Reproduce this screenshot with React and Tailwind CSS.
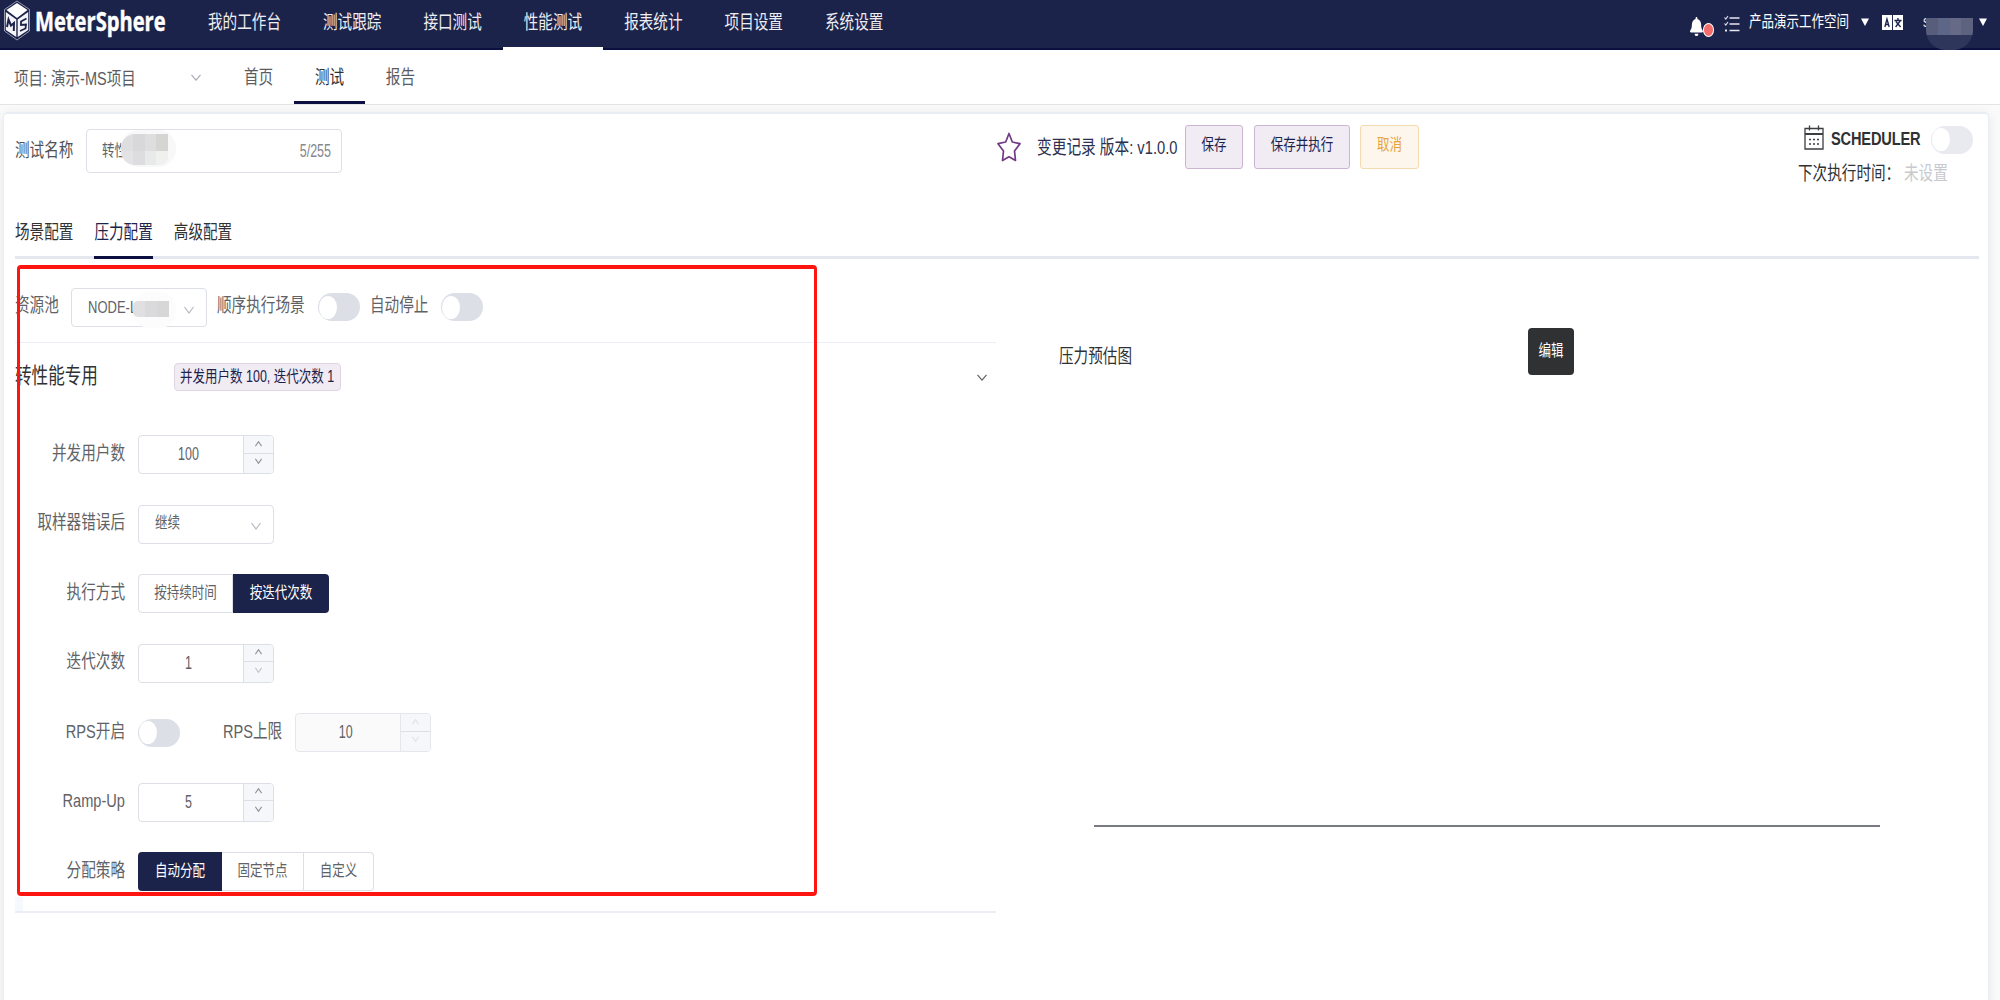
import React from "react";
import { FaBell } from "react-icons/fa";

const FONT = "font-['Liberation_Sans','Noto_Sans_CJK_SC',sans-serif]";

/* Tall, narrow lettering used by every label of the page. */
function T({ children, tall = false, className = "" }) {
  return (
    <span className={`inline-block shrink-0 origin-center whitespace-nowrap leading-none ${tall ? "scale-y-[1.48]" : "scale-y-[1.29]"} ${className}`}>
      {children}
    </span>
  );
}

function Chevron({ up = false, className = "" }) {
  return (
    <svg viewBox="0 0 10 8" preserveAspectRatio="none" className={className} fill="none" stroke="currentColor" strokeWidth="1.2">
      <path vectorEffect="non-scaling-stroke" d={up ? "M0.5 7 L5 1 L9.5 7" : "M0.5 1 L5 7 L9.5 1"} />
    </svg>
  );
}

function Switch({ tone = "bg-[#dcdfe6]" }) {
  return (
    <span className={`flex h-7 w-[42px] shrink-0 items-center rounded-[14px] px-px ${tone}`}>
      <span className="h-[23px] w-[18px] rounded-[50%] bg-white" />
    </span>
  );
}

function NumberBox({ value, disabled = false, dimDown = false }) {
  return (
    <div className={`flex h-[39px] w-[136px] shrink-0 overflow-hidden rounded-[4px] border ${disabled ? "border-[#e4e7ed] bg-[#fafafa]" : "border-[#dcdfe6] bg-white"}`}>
      <div className="flex flex-1 items-center justify-center pr-[5px] text-[12.5px] text-[#606266]">
        <T tall>{value}</T>
      </div>
      <div className={`flex w-[30px] flex-col border-l bg-[#f5f7fa] ${disabled ? "border-[#e4e7ed] text-[#dfe2e8]" : "border-[#dcdfe6] text-[#909399]"}`}>
        <div className="flex flex-1 items-center justify-center border-b border-[#dcdfe6] pb-px">
          <Chevron up className="h-[6px] w-[7px]" />
        </div>
        <div className={`flex flex-1 items-center justify-center pb-1 ${dimDown ? "text-[#c0c4cc]" : ""}`}>
          <Chevron className="h-[6px] w-[7px]" />
        </div>
      </div>
    </div>
  );
}

function Segments({ items }) {
  return (
    <div className="flex h-[39px] text-[12.5px] text-[#606266]">
      {items.map((it, i) => (
        <div
          key={it.label}
          className={`flex items-center justify-center first:rounded-l-[4px] last:rounded-r-[4px] ${it.width} ${
            it.active ? "bg-[#1c234b] text-white" : "border-y border-r border-[#dcdfe6] bg-white"
          } ${i === 0 && !it.active ? "border-l" : ""}`}
        >
          <T>{it.label}</T>
        </div>
      ))}
    </div>
  );
}

function FormRow({ label, children }) {
  return (
    <div className="flex h-[69.5px] items-start">
      <div className="flex h-[38px] w-[110px] shrink-0 items-center justify-end text-[14.6px] text-[#606266]">
        <T>{label}</T>
      </div>
      <div className="ml-[13px] flex items-center">{children}</div>
    </div>
  );
}

function Logo() {
  return (
    <div className="flex items-center">
      <svg viewBox="0 0 28 42" className="ml-[3px] h-[42px] w-7">
        <path d="M14 1 L26.5 9.5 V31 L14 40 L1.5 31 V9.5 Z" fill="none" stroke="#c9cbd8" strokeWidth="0.7" />
        <path d="M14 3 L24.5 10 L14 18 L3.5 10 Z" fill="#fff" />
        <path d="M2.8 12 L13.3 19.5 V37 L2.8 30 Z M25.2 12 L14.7 19.5 V37 L25.2 30 Z" fill="#f4f4f8" />
        <path d="M4 27 L5.5 19.5 L8 25.5 L11 23 L10.8 31" fill="none" stroke="#1c234b" strokeWidth="2" />
        <path d="M23.5 18.5 L18 21.5 L18 25 L23 24.5 L22.5 28.5 L17 31" fill="none" stroke="#1c234b" strokeWidth="1.8" />
      </svg>
      <span className="ml-[4px] mt-[-1px] inline-block w-[131px] origin-left scale-x-[0.875] scale-y-[1.2] whitespace-nowrap font-['Open_Sans',sans-serif] text-[23px] font-bold leading-none text-white [-webkit-text-stroke:0.4px_white]">
        MeterSphere
      </span>
    </div>
  );
}

function TopBar() {
  const items = ["我的工作台", "测试跟踪", "接口测试", "性能测试", "报表统计", "项目设置", "系统设置"];
  return (
    <header className="flex h-[50px] justify-between border-b-2 border-[#0b1040] bg-[#1c234b] text-white">
      <div className="flex">
        <div className="flex w-[187px] items-start">
          <Logo />
        </div>
        <nav className="flex text-[14.6px] text-[#eeeef2]">
          {items.map((t) => (
            <div key={t} className={`flex h-[50px] items-center px-[21px] pb-[4px] ${t === "性能测试" ? "shadow-[inset_0_-3px_0_#fff]" : ""}`}>
              <T>{t}</T>
            </div>
          ))}
        </nav>
      </div>
      <div className="flex h-[44px] items-center">
        <span className="relative mt-2 flex w-[34px]">
          <FaBell className="h-[19px] w-[13px]" preserveAspectRatio="none" />
          <span className="absolute left-[13px] top-[6px] h-[14px] w-[11.5px] rounded-[50%] border border-white bg-[#f56c6c]" />
        </span>
        <svg viewBox="0 0 16 18" className="mt-[3px] h-[18px] w-4" fill="none" stroke="#e6e7ee" strokeWidth="1.5">
          <path d="M5.5 3 H15.5 M5.5 9 H15.5 M5.5 15.5 H15.5" />
          <path d="M0.5 2.5 L1.8 4 L4 1 M0.5 8.5 L1.8 10 L4 7" strokeWidth="1.1" />
          <path d="M1 15.5 H3" strokeWidth="2" />
        </svg>
        <T className="ml-[9px] text-[12.5px]">产品演示工作空间</T>
        <svg viewBox="0 0 8 8" className="ml-[12px] h-2 w-2"><path d="M0 0.5 H8 L4 8 Z" fill="#fff" /></svg>
        <svg viewBox="0 0 22 15" preserveAspectRatio="none" className="ml-[13px] h-[15px] w-[21px]">
          <path d="M0 0 H10.5 V15 H0 Z M11.5 0 H22 V15 H11.5 Z" fill="#fff" />
          <path d="M3 12 L5.2 4 L7.5 12 M3.6 9.5 H7" fill="none" stroke="#1c234b" strokeWidth="1.4" />
          <path d="M13 5.5 H20.5 M16.7 3 V5.5 M14.3 12 L19 6 M14.5 6.5 L19.5 12" fill="none" stroke="#1c234b" strokeWidth="1.4" />
        </svg>
        <span className="relative ml-[20px] flex w-[49px] justify-between text-[12.5px] text-[#e6e7ee]">
          <T>s</T>
          <T>g</T>
          <span className="absolute left-[3px] top-[2px] h-[32px] w-[47px] overflow-hidden rounded-b-[20px] bg-[#2f365b]">
            <span className="flex h-[17px]">
              <span className="w-3 bg-[#585d7c]" />
              <span className="w-3 bg-[#5e6688]" />
              <span className="w-3 bg-[#666a87]" />
              <span className="w-3 bg-[#5d627f]" />
            </span>
          </span>
        </span>
        <svg viewBox="0 0 8 8" className="ml-[7px] mr-[13px] h-2 w-2"><path d="M0 0.5 H8 L4 8 Z" fill="#fff" /></svg>
      </div>
    </header>
  );
}

function SubBar() {
  return (
    <div className="flex h-[55px] border-b border-[#e4e4e6] bg-white text-[14.6px] text-[#5a5c60]">
      <div className="flex w-[223px] items-center pl-[14px]">
        <T className="mt-[4px] w-[177px] text-[14.5px]">项目: 演示-MS项目</T>
        <Chevron className="h-[7px] w-[10px] text-[#a8abb2]" />
      </div>
      {["首页", "测试", "报告"].map((t) => (
        <div key={t} className={`flex h-[54px] items-center px-[20.9px] pt-[2px] ${t === "测试" ? "text-[#303133] shadow-[inset_0_-3px_0_#0b1040]" : ""}`}>
          <T>{t}</T>
        </div>
      ))}
    </div>
  );
}

function Toolbar() {
  const btn = "flex h-11 items-center justify-center rounded-[3px] border pb-[3px] text-[12.5px]";
  return (
    <div className="flex h-[86px]">
      <div className="flex h-[74px] w-[978px] items-center text-[14.6px] text-[#606266]">
        <T className="w-[71px] text-[#505256]">测试名称</T>
        <div className="relative flex h-11 w-[256px] items-center justify-between rounded-[4px] border border-[#dcdfe6] pl-[15px] pr-[10px] text-[12.5px]">
          <T>转性</T>
          <T tall className="text-[#85888f]">5/255</T>
          <span className="absolute left-[34px] top-0 h-[37px] w-[55px] rounded-[18px] bg-[#f8f8f8]" />
          <span className="absolute left-[34px] top-[4px] grid h-[31px] w-[47px] grid-cols-4 grid-rows-[17px_14px] overflow-hidden rounded-l-[14px] rounded-br-[8px]">
            <span className="bg-[#dedee0]" /><span className="bg-[#d8d8da]" /><span className="bg-[#dedede]" /><span className="bg-[#d5d5d3]" />
            <span className="bg-[#e3e3e5]" /><span className="bg-[#dddde0]" /><span className="bg-[#e8e9e9]" /><span className="bg-[#f0f0ef]" />
          </span>
        </div>
      </div>
      <div className="flex h-[66px] items-center">
        <svg viewBox="0 0 24 30" preserveAspectRatio="none" className="ml-[4px] h-[30px] w-6" fill="none" stroke="#713a84" strokeWidth="1.7" strokeLinejoin="round">
          <path d="M12 1.5 L15.3 10 L23 11.7 L17.5 19 L18.5 28.5 L12 24.8 L5.5 28.5 L6.5 19 L1 11.7 L8.7 10 Z" />
        </svg>
        <T className="ml-[16px] mt-[3px] w-[148px] text-[14.7px] text-[#2c3050]">变更记录 版本: v1.0.0</T>
        <div className={`${btn} w-[58px] border-[#cbb5d3] bg-[#f1ebf3] text-[#1c234b]`}><T>保存</T></div>
        <div className={`${btn} ml-[11px] w-[96px] border-[#cbb5d3] bg-[#f1ebf3] text-[#1c234b]`}><T>保存并执行</T></div>
        <div className={`${btn} ml-[10px] w-[59px] border-[#f5dab1] bg-[#fdf6ec] text-[#e6a23c]`}><T>取消</T></div>
      </div>
      <div className="ml-auto mr-[9px] flex w-[181px] flex-col">
        <div className="flex h-[51px] items-center">
          <svg viewBox="0 0 20 25" className="mb-[5px] ml-[6px] h-[25px] w-5" fill="none" stroke="#3c3e42" strokeWidth="1.3">
            <path d="M1 3.5 H19 V24 H1 Z" />
            <path d="M1 9 H19" strokeWidth="2" />
            <path d="M5.5 0.5 V5.5 M14.5 0.5 V5.5" />
            <path d="M5 14.5 H7 M9 14.5 H11 M13 14.5 H15 M5 19 H7 M9 19 H11 M13 19 H15" />
          </svg>
          <T className="ml-[7px] w-[100px] text-[14.6px] font-bold tracking-[-0.15px] text-[#303133]">SCHEDULER</T>
          <Switch tone="bg-[#e9eaef]" />
        </div>
        <div className="mt-[2px] flex h-[14px] items-center text-[14.6px] text-[#303133]">
          <T className="w-[106px]">下次执行时间：</T>
          <T className="text-[#c8c9cc]">未设置</T>
        </div>
      </div>
    </div>
  );
}

function Tabs() {
  return (
    <div className="mr-[9px] mt-[12px] flex h-[47px] border-b-[3px] border-[#e4e7ed] text-[14.6px] text-[#303133]">
      {["场景配置", "压力配置", "高级配置"].map((t) => (
        <div key={t} className={`mr-[21px] flex h-[47px] items-center pt-[2px] pb-[6px] ${t === "压力配置" ? "text-[#1c234b] shadow-[inset_0_-3px_0_#0b1040]" : ""}`}>
          <T>{t}</T>
        </div>
      ))}
    </div>
  );
}

function PressureForm() {
  return (
    <section className="w-[981px]">
      <div className="flex h-[84px] items-center border-b border-[#ebeef5] pt-[13px] text-[14.6px] text-[#606266]">
        <T className="mb-px w-[56px]">资源池</T>
        <div className="relative flex h-[39px] w-[136px] items-center rounded-[4px] border border-[#dcdfe6] pl-4 text-[13px]">
          <T>NODE-L</T>
          <span className="absolute left-[61px] top-[3px] h-[36px] w-[43px] rounded-[16px] bg-[#fcfcfc]" />
          <span className="absolute left-[61px] top-[12px] flex h-4 w-9 overflow-hidden rounded-l-[5px]">
            <span className="flex-1 bg-[#e0e0e2]" /><span className="flex-1 bg-[#dadadc]" /><span className="flex-1 bg-[#d7d7d8]" />
          </span>
          <Chevron className="ml-auto mr-[12px] mt-[5px] h-[8px] w-[10px] text-[#b4b8c0]" />
        </div>
        <T className="mb-px ml-[10px] w-[101px]">顺序执行场景</T>
        <Switch />
        <T className="mb-px ml-[10px] w-[71px]">自动停止</T>
        <Switch />
      </div>
      <div className="flex h-[92px] items-start pt-[20px]">
        <div className="flex h-7 w-[159px] items-center text-[16.6px] text-[#303133]"><T>转性能专用</T></div>
        <div className="flex h-7 w-[167px] items-center rounded-[4px] border border-[#e0d4e5] bg-[#f1ebf3] pl-[5px] text-[12.5px] text-[#1c234b]">
          <T>并发用户数 100, 迭代次数 1</T>
        </div>
        <Chevron className="ml-auto mr-[9px] mt-[11px] h-[7px] w-[10px] text-[#606266]" />
      </div>
      <FormRow label="并发用户数"><NumberBox value="100" /></FormRow>
      <FormRow label="取样器错误后">
        <div className="flex h-[39px] w-[136px] items-center justify-between rounded-[4px] border border-[#dcdfe6] pl-4 pr-[12px] text-[12.5px] text-[#606266]">
          <T className="mb-px">继续</T>
          <Chevron className="mt-1 h-[8px] w-[10px] text-[#b4b8c0]" />
        </div>
      </FormRow>
      <FormRow label="执行方式">
        <Segments items={[{ label: "按持续时间", width: "w-[95px]" }, { label: "按迭代次数", width: "w-[96px]", active: true }]} />
      </FormRow>
      <FormRow label="迭代次数"><NumberBox value="1" dimDown /></FormRow>
      <FormRow label="RPS开启">
        <Switch />
        <T className="ml-[43px] mr-[13px] pb-px text-[14.6px] text-[#606266]">RPS上限</T>
        <NumberBox value="10" disabled />
      </FormRow>
      <FormRow label="Ramp-Up"><NumberBox value="5" /></FormRow>
      <FormRow label="分配策略">
        <Segments
          items={[
            { label: "自动分配", width: "w-[84px]", active: true },
            { label: "固定节点", width: "w-[82px]" },
            { label: "自定义", width: "w-[70px]" },
          ]}
        />
      </FormRow>
      <div className="mt-[-25px] h-[14px] w-2 bg-[#f5f8fc]" />
      <div className="h-[2px] bg-[#ebeef5]" />
    </section>
  );
}

function Estimate() {
  return (
    <section className="flex flex-1 flex-col pl-[63px]">
      <div className="flex h-[197px] items-center text-[14.6px] text-[#303133]"><T>压力预估图</T></div>
      <div className="ml-[35px] mt-[369px] h-[2px] w-[786px] bg-[#797b82]" />
    </section>
  );
}

export default function App() {
  return (
    <div className={`relative h-[1000px] w-[2000px] overflow-hidden bg-[#fafafa] ${FONT}`}>
      <TopBar />
      <SubBar />
      <main className="ml-[3px] mt-[7px] h-[900px] w-[1986px] rounded-t-[5px] border border-t-2 border-[#e9edf4] bg-white pl-[11px] shadow-[0_2px_12px_rgba(0,0,0,0.08)]">
        <Toolbar />
        <Tabs />
        <div className="flex">
          <PressureForm />
          <Estimate />
        </div>
      </main>
      <div className="absolute left-[17px] top-[265px] h-[631px] w-[800px] rounded-[4px] border-x-[3px] border-y-4 border-[#ff150f]" />
      <div className="absolute left-[1528px] top-[328px] flex h-[47px] w-[46px] items-center justify-center rounded-[4px] bg-[#303133] text-[12.5px] text-white">
        <T>编辑</T>
      </div>
    </div>
  );
}
